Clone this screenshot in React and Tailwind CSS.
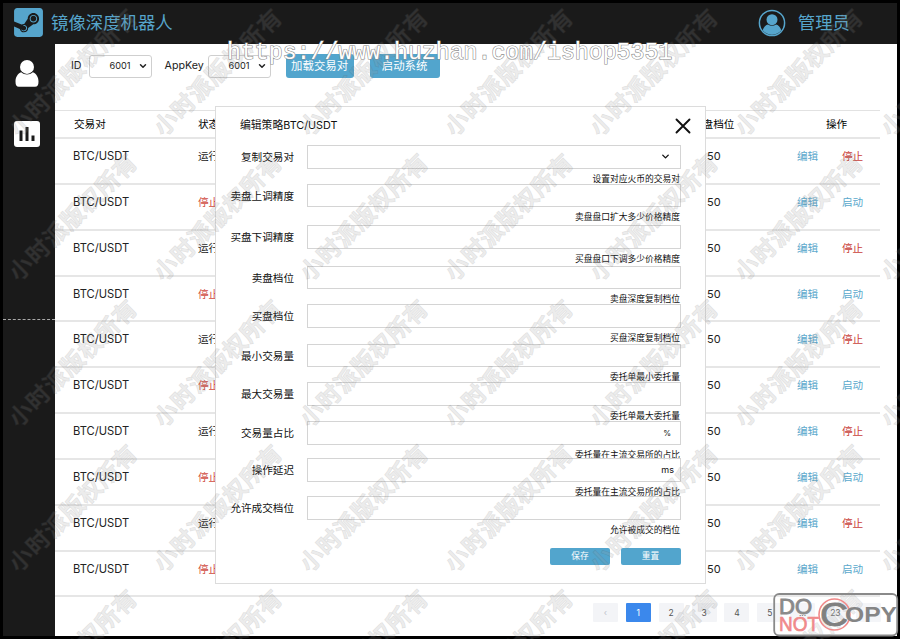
import React, { useState } from "react";
import { FaSteamSquare } from "react-icons/fa";
import { ChevronDown } from "lucide-react";

const rows = [true, false, true, false, true, false, true, false, true, false];

const fields = [
  { label: "复制交易对", hint: "设置对应火币的交易对", height: "h-[38.5px]", select: true },
  { label: "卖盘上调精度", hint: "卖盘盘口扩大多少价格精度", height: "h-[41.5px]" },
  { label: "买盘下调精度", hint: "买盘盘口下调多少价格精度", height: "h-[40.5px]" },
  { label: "卖盘档位", hint: "卖盘深度复制档位", height: "h-[38.5px]" },
  { label: "买盘档位", hint: "买盘深度复制档位", height: "h-[39.5px]" },
  { label: "最小交易量", hint: "委托单最小委托量", height: "h-[38.5px]" },
  { label: "最大交易量", hint: "委托单最大委托量", height: "h-[39px]" },
  { label: "交易量占比", hint: "委托量在主流交易所的占比", height: "h-[37px]", unit: "%" },
  { label: "操作延迟", hint: "委托量在主流交易所的占比", height: "h-[38px]", unit: "ms" },
  { label: "允许成交档位", hint: "允许被成交的档位", height: "h-[38px]" },
];

const pages = ["‹", "1", "2", "3", "4", "5", "...", "23", "›"];

function SmallSelect({ value }) {
  return (
    <div className="flex h-[23px] w-[63px] items-center justify-end rounded-[3px] border border-[#cfcfcf] pr-[3px]">
      <span className="mr-[7px] text-[9.2px] leading-none text-[#222]">{value}</span>
      <ChevronDown size={10} strokeWidth={3.5} color="#222" />
    </div>
  );
}

function Header() {
  return (
    <header className="flex h-[41px] shrink-0 items-center bg-[#1a1a1a] text-[17.4px] text-[#56a5cc]">
      <FaSteamSquare className="-mt-[2px] ml-[9px] h-[33px] w-[33px]" />
      <h1 className="-mt-[2px] ml-[6px] leading-none">镜像深度机器人</h1>
      {/*user*/}
      <div className="-mt-[2px] ml-auto mr-[47px] flex items-center gap-[12px]">
        <svg width="28" height="28" viewBox="0 0 28 28">
          <circle cx="14" cy="14" r="12.6" fill="none" stroke="#56a5cc" strokeWidth="1.5" />
          <circle cx="14" cy="10.7" r="5.5" fill="#56a5cc" />
          <path d="M4.7 21.2C5.7 18 8 16 10 15.6c2.4 1.6 5.6 1.6 8 0 2 .4 4.3 2.4 5.3 5.6A11.8 11.8 0 0 1 4.7 21.2z" fill="#56a5cc" />
        </svg>
        <span className="leading-none">管理员</span>
      </div>
    </header>
  );
}

function Sidebar() {
  return (
    <nav className="flex w-[52px] shrink-0 flex-col items-center bg-[#1a1a1a] pt-[15px]">
      <svg className="mr-[4px]" width="24" height="29" viewBox="0 0 24 29">
        <circle cx="12" cy="7.9" r="7" fill="#fff" />
        <path d="M6.2 13.3c3.4 3 8.2 3 11.6 0 3.4 1.3 5.7 4.7 5.7 9.2 0 3.7-1 5.3-3.5 5.3H4C1.5 27.8.5 26.2.5 22.5c0-4.5 2.3-7.9 5.7-9.2z" fill="#fff" />
      </svg>
      <svg className="mr-[4px] mt-[33px]" width="26" height="26" viewBox="0 0 26 26">
        <rect width="26" height="26" rx="3" fill="#fff" />
        <path d="M5.5 9.5h3V20h-3zM11.5 6h3v14h-3zM17.5 14.5h3V20h-3z" fill="#1a1a1a" />
      </svg>
      <div className="mt-[172px] w-full border-t border-dashed border-[#aaa]" />
    </nav>
  );
}

function Toolbar() {
  return (
    <div className="flex h-[44px] items-center pl-[16px] text-[10.7px] text-[#222]">
      <span>ID</span>
      <div className="ml-[7px]">
        <SmallSelect value="6001" />
      </div>
      <span className="ml-[13px] w-[42px]">AppKey</span>
      <div className="ml-px">
        <SmallSelect value="6001" />
      </div>
      <button className="ml-[15px] h-[24px] w-[68px] rounded-[3px] bg-[#52a5cd] pt-px text-[11.4px] text-white">加载交易对</button>
      <button className="ml-[16px] h-[24px] w-[70px] rounded-[3px] bg-[#52a5cd] pt-px text-[11.4px] text-white">启动系统</button>
    </div>
  );
}

function Table() {
  return (
    <div className="mt-[22px] w-[825px] text-[10.6px] text-[#222]">
      <div className="flex h-[29px] items-center border-b-2 border-t border-b-[#e6e6e6] border-t-[#e2e2e2] pl-[19px] pt-px text-black">
        <span className="w-[124px]">交易对</span>
        <span className="w-[494px]">状态</span>
        <span className="w-[134px]">买盘档位</span>
        <span>操作</span>
      </div>
      {rows.map((running, i) => (
        <div key={i} className="flex h-[45.85px] border-b-2 border-[#e6e6e6] pl-[18px] pt-[10px] leading-[16px]">
          <span className="-mt-px w-[125px] text-[11.2px]">BTC/USDT</span>
          <span className={running ? "w-[509px]" : "w-[509px] text-[#d04a40]"}>{running ? "运行" : "停止"}</span>
          <span className="-mt-px w-[90px] text-[11px]">50</span>
          <span className="w-[45px] text-[#5aa8cc]">编辑</span>
          <span className={running ? "text-[#c9403a]" : "text-[#5aa8cc]"}>{running ? "停止" : "启动"}</span>
        </div>
      ))}
    </div>
  );
}

function Pagination() {
  return (
    <div className="mt-[6px] flex gap-[7.85px] pl-[538px] text-[8.5px] text-[#555]">
      {pages.map((page) => (
        <span
          key={page}
          className={
            page === "1"
              ? "flex h-[19px] w-[25px] items-center justify-center rounded-[1px] bg-[#3b88ec] text-white"
              : page === "‹"
                ? "flex h-[19px] w-[25px] items-center justify-center rounded-[1px] bg-[#f3f4f7] text-[#c0c4cc]"
                : "flex h-[19px] w-[25px] items-center justify-center rounded-[1px] bg-[#f3f4f7]"
          }
        >
          {page}
        </span>
      ))}
    </div>
  );
}

function EditModal({ onClose }) {
  return (
    <div className="absolute left-[215px] top-[106px] h-[477.5px] w-[491px] border-[1.5px] border-[#dcdcdc] bg-white text-[#111]">
      {/*header*/}
      <div className="flex h-[38px] items-center pl-[24px] pr-[14px]">
        <h3 className="text-[10.8px]">编辑策略BTC/USDT</h3>
        <button className="ml-auto" onClick={onClose}>
          <svg width="16" height="16" viewBox="0 0 16 16">
            <path d="M1.5 1.5l13 13M14.5 1.5l-13 13" stroke="#111" strokeWidth="1.9" strokeLinecap="round" />
          </svg>
        </button>
      </div>
      {/*body*/}
      {fields.map((field) => (
        <div key={field.label} className={`flex ${field.height}`}>
          <label className="w-[78px] text-right text-[10.6px] leading-[25px]">{field.label}</label>
          <div className="ml-[13px] w-[374px]">
            <div className="flex h-[23.5px] items-center justify-end border border-[#d4d4d4] pr-[9px] text-[9px]">
              {field.select && <ChevronDown size={11} strokeWidth={3} />}
              {field.unit === "%" && <span className="text-[8px]">%</span>}
              {field.unit === "ms" && <span className="-mr-[3px]">ms</span>}
            </div>
            <p className="mr-px mt-[4px] text-right text-[8.75px] leading-[12px]">{field.hint}</p>
          </div>
        </div>
      ))}
      {/*footer*/}
      <div className="mt-[14px] flex justify-end gap-[10.5px] pr-[24.5px] text-[8.7px] text-white">
        <button className="h-[17px] w-[60px] rounded-[2px] bg-[#52a5cd]">保存</button>
        <button className="h-[17px] w-[60px] rounded-[2px] bg-[#52a5cd]">重置</button>
      </div>
    </div>
  );
}

// tiled diagonal copyright text
function Watermark() {
  return (
    <div className="pointer-events-none absolute inset-0 overflow-hidden opacity-[0.18]">
      <div className="grid w-[1017.1px] auto-rows-[145.3px] grid-cols-[repeat(7,145.3px)]">
        {Array.from({ length: 35 }).map((_, i) => (
          <div key={i} className="flex items-center justify-center pl-[2px]">
            <span className="-rotate-[44.5deg] whitespace-nowrap text-[23px] font-medium leading-none tracking-[1.2px] text-[#999] [-webkit-text-stroke:1.3px_#555] [paint-order:stroke_fill]">
              小时派版权所有
            </span>
          </div>
        ))}
      </div>
    </div>
  );
}

function CopyStamp() {
  return (
    <svg className="absolute bottom-0 right-0" width="128" height="47" viewBox="0 0 128 47" fontFamily="Liberation Sans, sans-serif">
      <rect x="2.2" y="2" width="123" height="41.5" rx="5" fill="#fff" fillOpacity="0.15" stroke="#8a8a8a" strokeWidth="1.8" />
      <text x="7" y="21.5" fontSize="22" textLength="33" lengthAdjust="spacingAndGlyphs" fill="#8a8a8a" stroke="#8a8a8a" strokeWidth="0.9">DO</text>
      <text x="7" y="39" fontSize="20.5" textLength="40" lengthAdjust="spacingAndGlyphs" fill="#f08a8a" stroke="#f08a8a" strokeWidth="0.7">NOT</text>
      <circle cx="62.5" cy="22.5" r="15.5" fill="none" stroke="#f08a8a" strokeWidth="1.6" />
      <text x="48" y="34" fontSize="34" textLength="28" lengthAdjust="spacingAndGlyphs" fill="#808080" stroke="#808080" strokeWidth="0.9">C</text>
      <text x="73" y="30" fontSize="22" fontWeight="bold" textLength="52" lengthAdjust="spacingAndGlyphs" fill="#858585">OPY</text>
    </svg>
  );
}

export default function App() {
  const [showModal, setShowModal] = useState(true);

  return (
    <div className="relative h-[639px] w-[900px] overflow-hidden bg-black p-[3px] font-['Inter','Noto_Sans_CJK_SC',sans-serif]">
      <div className="flex h-[633px] w-[894px] flex-col">
        <Header />
        <div className="flex min-h-0 flex-1">
          <Sidebar />
          <main className="min-w-0 flex-1 overflow-hidden bg-white">
            <Toolbar />
            <Table />
            <Pagination />
          </main>
        </div>
      </div>
      {showModal ? <EditModal onClose={() => setShowModal(false)} /> : null}
      <Watermark />
      <div className="pointer-events-none absolute left-[227px] top-[40px] whitespace-nowrap font-['Liberation_Mono',monospace] text-[23.2px] leading-[26px] text-white [-webkit-text-stroke:1.2px_#8c8c8c] [paint-order:stroke_fill]">
        https://www.huzhan.com/ishop5351
      </div>
      <CopyStamp />
    </div>
  );
}
